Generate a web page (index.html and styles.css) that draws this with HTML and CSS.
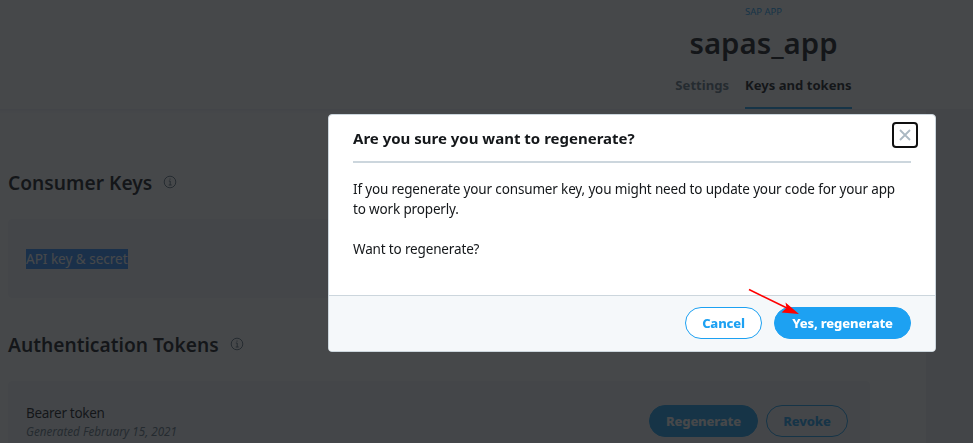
FILE: index.html
```html
<!DOCTYPE html>
<html lang="en">
<head>
    <meta charset="UTF-8">
    <meta name="viewport" content="width=device-width, initial-scale=1.0">
    <title>sapas_app</title>
    <link rel="stylesheet" href="styles.css">
</head>
<body>
    <div id="page">
        <header id="app-header">
            <div class="app-title">
                <a class="app-project">SAP APP</a>
                <h1>sapas_app</h1>
            </div>
            <nav class="tabs">
                <a class="tab">Settings</a>
                <a class="tab active">Keys and tokens</a>
            </nav>
        </header>
        <main id="content">
            <section class="keys">
                <h2>Consumer Keys
                    <svg class="info" viewBox="0 0 14 14"><circle cx="7" cy="7" r="5.8"/><path d="M5.8 6h1.4v4M5.7 10h3M7 3.5v1.2"/></svg>
                </h2>
                <div class="card consumer-card">
                    <span class="selected">API key &amp; secret</span>
                </div>
            </section>
            <section class="keys">
                <h2>Authentication Tokens
                    <svg class="info" viewBox="0 0 14 14"><circle cx="7" cy="7" r="5.8"/><path d="M5.8 6h1.4v4M5.7 10h3M7 3.5v1.2"/></svg>
                </h2>
                <div class="card token-card">
                    <div class="token">
                        <div class="token-name">Bearer token</div>
                        <div class="token-date">Generated February 15, 2021</div>
                    </div>
                    <button class="btn primary regenerate">Regenerate</button>
                    <button class="btn revoke">Revoke</button>
                </div>
            </section>
        </main>
    </div>

    <div id="overlay">
        <div id="modal">
            <div class="modal-header">
                <h3>Are you sure you want to regenerate?</h3>
                <button class="close" aria-label="Close">
                    <svg viewBox="0 0 12 12"><path d="M1 1l10 10M11 1L1 11"/></svg>
                </button>
            </div>
            <div class="modal-body">
                <p class="wide">If you regenerate your consumer key, you might need to update your code for your app</p>
                <p>to work properly.</p>
                <p class="question">Want to regenerate?</p>
            </div>
            <div class="modal-footer">
                <button class="btn cancel">Cancel</button>
                <button class="btn primary confirm">Yes, regenerate</button>
            </div>
            <svg class="arrow" viewBox="0 0 54 28">
                <path class="line" d="M1 1.5L41 21"/>
                <path class="head" d="M51 26L33.5 24.5L38.5 20L37.5 14.5Z"/>
            </svg>
        </div>
    </div>
</body>
</html>
```

FILE: styles.css
```css
* {
    margin: 0;
    padding: 0;
    box-sizing: border-box;
}

body {
    font-family: "Noto Sans", "Open Sans", sans-serif;
    font-size: 13.5px;
    line-height: 20px;
    color: #14171a;
    height: 443px;
    overflow: hidden;
}

#page {
    height: 443px;
    background: #f0f0f5;
    overflow: hidden;
}

/* App header */
#app-header {
    height: 109px;
    background: white;
    display: flex;
    flex-direction: column;
    align-items: center;
    padding-left: 554px;
}

.app-title {
    height: 73px;
    display: flex;
    flex-direction: column;
    align-items: center;
}

.app-project {
    font-size: 9.5px;
    line-height: 12px;
    margin-top: 6px;
    color: #1da1f2;
}

h1 {
    font-size: 29.4px;
    font-weight: 600;
    line-height: 36px;
    margin-top: 7px;
}

.tabs {
    display: flex;
    gap: 16px;
    height: 36px;
}

.tab {
    font-weight: bold;
    font-size: 13.1px;
    line-height: 24px;
    color: #657786;
}

.tab.active {
    color: #14171a;
    border-bottom: 2px solid #1da1f2;
}

/* Keys */
#content {
    width: 926px;
    height: 334px;
    background: linear-gradient(#f0f0f8, white 5px);
    padding: 61px 56px 0 8px;
}

h2 {
    display: flex;
    align-items: center;
    gap: 11px;
    height: 26px;
    font-size: 19.2px;
    font-weight: 600;
}

.info {
    width: 14px;
    height: 14px;
    margin-top: -3px;
    fill: none;
    stroke: #657786;
    stroke-width: 1;
}

.card {
    background: #f5f6fa;
    border-radius: 4px;
    margin-top: 23px;
    padding: 0 22px 0 18px;
    display: flex;
    align-items: center;
}

.consumer-card {
    height: 79px;
    margin-bottom: 34px;
}

.selected {
    background: #338fff;
    color: white;
}

.token-card {
    height: 80px;
}

.token {
    flex: 1;
    padding-top: 1px;
}

.token-name {
    line-height: 20px;
    letter-spacing: -0.3px;
}

.token-date {
    font-size: 11.7px;
    line-height: 17px;
    font-style: italic;
    color: #657786;
}

.btn {
    height: 32px;
    border: 1px solid #1da1f2;
    border-radius: 16px;
    background: white;
    color: #1da1f2;
    font-family: inherit;
    font-size: 13px;
    font-weight: 800;
    letter-spacing: -0.15px;
    white-space: nowrap;
}

.btn.primary {
    background: #1da1f2;
    color: white;
}

.regenerate {
    width: 109px;
    margin-right: 8px;
}

.revoke {
    width: 82px;
    background: transparent;
}

/* Confirmation dialog */
#overlay {
    position: fixed;
    inset: 0;
    background: rgba(20, 23, 26, 0.79);
    padding: 114px 0 0 328px;
}

#modal {
    width: 608px;
    height: 238px;
    background: white;
    border: 1px solid #ccd6dd;
    border-radius: 4px;
    position: relative;
    overflow: hidden;
    display: flex;
    flex-direction: column;
}

.modal-header {
    height: 48px;
    margin: 0 24px;
    border-bottom: 2px solid #ccd6dd;
    display: flex;
    justify-content: space-between;
}

h3 {
    font-size: 15px;
    font-weight: bold;
    line-height: 20px;
    margin-top: 13px;
}

.close {
    width: 26px;
    height: 26px;
    margin: 7px -7px 0 0;
    border: 2px solid #101010;
    border-radius: 4px;
    background: white;
    display: flex;
    align-items: center;
    justify-content: center;
}

.close svg {
    width: 12px;
    height: 12px;
    stroke: #aab8c2;
    stroke-width: 1.8;
}

.modal-body {
    flex: 1;
    padding: 16px 24px 0;
    letter-spacing: -0.15px;
    white-space: nowrap;
}

.question {
    margin-top: 20px;
}

.modal-footer {
    height: 56px;
    background: #f5f8fa;
    border-top: 1px solid #ccd6dd;
    padding: 0 24px 2px;
    display: flex;
    align-items: center;
    justify-content: flex-end;
    gap: 12px;
}

.cancel {
    width: 77px;
}

.confirm {
    width: 137px;
}

/* Pointer over the confirm button */
.arrow {
    position: absolute;
    left: 419px;
    top: 173px;
    width: 54px;
    height: 28px;
    fill: none;
}

.arrow .line {
    stroke: #f00;
    stroke-width: 1.6;
}

.arrow .head {
    fill: #f00;
}
```
